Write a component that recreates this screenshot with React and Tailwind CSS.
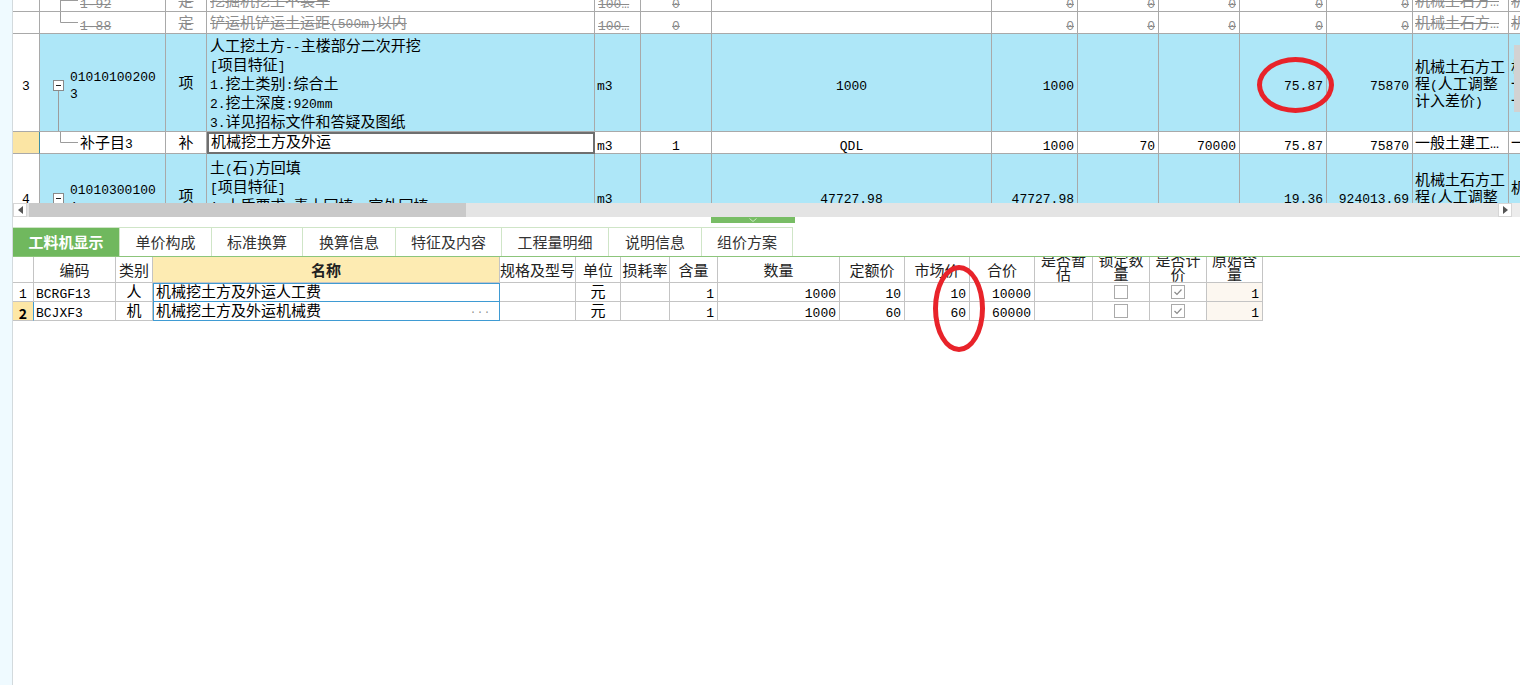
import React from "react";

const TC = ["w-[27px]","w-[126px]","w-[41px]","w-[388px]","w-[46px]","w-[71px]","w-[280px]","w-[86px]","w-[81px]","w-[81px]","w-[87px]","w-[86px]","w-[96px]","w-[40px]"];
const BC = ["w-[21px]","w-[82px]","w-[37px]","w-[347px]","w-[76px]","w-[45px]","w-[49px]","w-[48px]","w-[122px]","w-[65px]","w-[65px]","w-[65px]","w-[58px]","w-[57px]","w-[57px]","w-[56px]"];

function Cell({ w, a = "items-center", b = "border-r border-b border-[#a9a9a9]", pad = "pt-[5px]", className = "", children }) {
  return (
    <div className={`shrink-0 overflow-hidden flex ${a} ${b} ${pad} ${w} ${className}`}>{children}</div>
  );
}

const N = ({ children, className = "" }) => <span className={`text-[13px] pt-[3px] ${className}`}>{children}</span>;

function Tree({ last, h = 21 }) {
  return (
    <svg width="40" height={h} className="shrink-0">
      <line x1="20.5" y1="0" x2="20.5" y2={last ? Math.floor(h / 2) + 0.5 : h} stroke="#9c9c9c" strokeWidth="1" />
      <line x1="20.5" y1={Math.floor(h / 2) + 0.5} x2="38" y2={Math.floor(h / 2) + 0.5} stroke="#9c9c9c" strokeWidth="1" />
    </svg>
  );
}

function MinusBox() {
  return (
    <div className="w-[11px] h-[11px] shrink-0 border border-[#8a8a8a] bg-white flex items-center justify-center">
      <div className="w-[5px] h-px bg-[#222]" />
    </div>
  );
}

function StruckRow({ code, name, last, first }) {
  const s = "line-through decoration-[#8c8c8c]";
  return (
    <div className={`flex h-[22px] bg-white text-[#8c8c8c] ${first ? "-mt-[10px]" : ""}`}>
      <Cell w={TC[0]} />
      <Cell w={TC[1]} pad=""><Tree last={last} /><span className={`text-[13px] pt-[8px] ${s}`}>{code}</span></Cell>
      <Cell w={TC[2]} className="justify-center"><span className={`text-[15px] ${s}`}>定</span></Cell>
      <Cell w={TC[3]} className="pl-[3px]"><span className={`text-[15px] whitespace-nowrap ${s}`}>{name}</span></Cell>
      <Cell w={TC[4]} className="pl-[3px]"><N className={s}>100…</N></Cell>
      <Cell w={TC[5]} className="justify-center"><N className={s}>0</N></Cell>
      <Cell w={TC[6]} />
      {[7, 8, 9, 10, 11].map((i) => (
        <Cell key={i} w={TC[i]} className="justify-end pr-[3px]"><N className={s}>0</N></Cell>
      ))}
      <Cell w={TC[12]} className="pl-[2px]"><span className={`text-[15px] whitespace-nowrap ${s}`}>机械土石方…</span></Cell>
      <Cell w={TC[13]} className="pl-[2px]"><span className={`text-[15px] whitespace-nowrap ${s}`}>机械</span></Cell>
    </div>
  );
}

function TopTable() {
  const cy = "bg-[#aee7f8]";
  return (
    <div className="w-[1536px]">
      <StruckRow first code="1-92" name="挖掘机挖土不装车" />
      <StruckRow last code="1-88" name={<>铲运机铲运土运距<span className="text-[13px]">(500m)</span>以内</>} />

      {/* Row 3 */}
      <div className={`flex h-[98px] ${cy}`}>
        <Cell w={TC[0]} className="justify-center bg-white"><N>3</N></Cell>
        <Cell w={TC[1]} a="items-stretch" className="pl-[13px]">
          <div className="flex flex-col items-center w-[11px]">
            <div className="flex-1" />
            <MinusBox />
            <div className="flex-1 w-px bg-[#9c9c9c]" />
          </div>
          <div className="ml-[6px] flex flex-col justify-center text-[13px] leading-[17px] pt-[2px]">
            <span>01010100200</span>
            <span>3</span>
          </div>
        </Cell>
        <Cell w={TC[2]} className="justify-center text-[15px]">项</Cell>
        <Cell w={TC[3]} className="pl-[3px]">
          <div className="flex flex-col text-[15px] leading-[19px] whitespace-nowrap">
            <span>人工挖土方<span className="text-[13px]">--</span>主楼部分二次开挖</span>
            <span><span className="text-[13px]">[</span>项目特征<span className="text-[13px]">]</span></span>
            <span><span className="text-[13px]">1.</span>挖土类别<span className="text-[13px]">:</span>综合土</span>
            <span><span className="text-[13px]">2.</span>挖土深度<span className="text-[13px]">:920mm</span></span>
            <span><span className="text-[13px]">3.</span>详见招标文件和答疑及图纸</span>
          </div>
        </Cell>
        <Cell w={TC[4]} className="pl-[2px]"><N>m3</N></Cell>
        <Cell w={TC[5]} />
        <Cell w={TC[6]} className="justify-center"><N>1000</N></Cell>
        <Cell w={TC[7]} className="justify-end pr-[3px]"><N>1000</N></Cell>
        <Cell w={TC[8]} />
        <Cell w={TC[9]} />
        <Cell w={TC[10]} className="justify-end pr-[3px]"><N>75.87</N></Cell>
        <Cell w={TC[11]} className="justify-end pr-[3px]"><N>75870</N></Cell>
        <Cell w={TC[12]} className="pl-[2px]">
          <div className="flex flex-col text-[15px] leading-[17px] whitespace-nowrap">
            <span>机械土石方工</span>
            <span>程<span className="text-[13px]">(</span>人工调整</span>
            <span>计入差价<span className="text-[13px]">)</span></span>
          </div>
        </Cell>
        <Cell w={TC[13]} className="pl-[2px]">
          <div className="flex flex-col text-[15px] leading-[17px] whitespace-nowrap">
            <span>机械</span>
            <span>一</span>
            <span>一</span>
          </div>
        </Cell>
      </div>

      {/* 补子目 row */}
      <div className="flex h-[22px] bg-white">
        <Cell w={TC[0]} b="border-r border-b border-r-[#3b8ea6] border-b-[#a9a9a9]" className="bg-[#fbe5a4]" />
        <Cell w={TC[1]} pad=""><Tree last /><span className="text-[15px] pt-[5px]">补子目<span className="text-[13px]">3</span></span></Cell>
        <Cell w={TC[2]} className="justify-center text-[15px]">补</Cell>
        <Cell w={TC[3]} b="border-2 border-[#6f6f6f]" pad="pt-[3px]" className="pl-[2px]"><span className="text-[15px] whitespace-nowrap">机械挖土方及外运</span></Cell>
        <Cell w={TC[4]} className="pl-[2px]"><N>m3</N></Cell>
        <Cell w={TC[5]} className="justify-center"><N>1</N></Cell>
        <Cell w={TC[6]} className="justify-center"><N>QDL</N></Cell>
        <Cell w={TC[7]} className="justify-end pr-[3px]"><N>1000</N></Cell>
        <Cell w={TC[8]} className="justify-end pr-[3px]"><N>70</N></Cell>
        <Cell w={TC[9]} className="justify-end pr-[3px]"><N>70000</N></Cell>
        <Cell w={TC[10]} className="justify-end pr-[3px]"><N>75.87</N></Cell>
        <Cell w={TC[11]} className="justify-end pr-[3px]"><N>75870</N></Cell>
        <Cell w={TC[12]} className="pl-[2px]"><span className="text-[15px] whitespace-nowrap">一般土建工…</span></Cell>
        <Cell w={TC[13]} className="pl-[2px]"><span className="text-[15px] whitespace-nowrap">一般</span></Cell>
      </div>

      {/* Row 4 */}
      <div className={`flex h-[84px] ${cy}`}>
        <Cell w={TC[0]} className="justify-center bg-white"><N>4</N></Cell>
        <Cell w={TC[1]} a="items-stretch" className="pl-[13px]">
          <div className="flex flex-col items-center w-[11px]">
            <div className="flex-1" />
            <MinusBox />
            <div className="flex-1 w-px bg-[#9c9c9c]" />
          </div>
          <div className="ml-[6px] flex flex-col justify-center text-[13px] leading-[17px] pt-[2px]">
            <span>01010300100</span>
            <span>1</span>
          </div>
        </Cell>
        <Cell w={TC[2]} className="justify-center text-[15px]">项</Cell>
        <Cell w={TC[3]} className="pl-[3px]">
          <div className="flex flex-col text-[15px] leading-[19px] whitespace-nowrap">
            <span>土<span className="text-[13px]">(</span>石<span className="text-[13px]">)</span>方回填</span>
            <span><span className="text-[13px]">[</span>项目特征<span className="text-[13px]">]</span></span>
            <span><span className="text-[13px]">1.</span>土质要求<span className="text-[13px]">:</span>素土回填，室外回填</span>
            <span><span className="text-[13px]">2.</span>填方来源、运距<span className="text-[13px]">:</span>综合考虑</span>
          </div>
        </Cell>
        <Cell w={TC[4]} className="pl-[2px]"><N>m3</N></Cell>
        <Cell w={TC[5]} />
        <Cell w={TC[6]} className="justify-center"><N>47727.98</N></Cell>
        <Cell w={TC[7]} className="justify-end pr-[3px]"><N>47727.98</N></Cell>
        <Cell w={TC[8]} />
        <Cell w={TC[9]} />
        <Cell w={TC[10]} className="justify-end pr-[3px]"><N>19.36</N></Cell>
        <Cell w={TC[11]} className="justify-end pr-[3px]"><N>924013.69</N></Cell>
        <Cell w={TC[12]} className="pl-[2px]">
          <div className="flex flex-col text-[15px] leading-[17px] whitespace-nowrap">
            <span>机械土石方工</span>
            <span>程<span className="text-[13px]">(</span>人工调整</span>
            <span>计入差价<span className="text-[13px]">)</span></span>
          </div>
        </Cell>
        <Cell w={TC[13]} className="pl-[2px]">
          <div className="flex flex-col text-[15px] leading-[17px] whitespace-nowrap">
            <span>机械</span>
            <span>一</span>
          </div>
        </Cell>
      </div>
    </div>
  );
}

function HScroll() {
  return (
    <div className="h-[14px] flex bg-[#e4e4e4]">
      <div className="w-[14px] h-full bg-white border border-[#d6d6d6] flex items-center justify-center">
        <svg width="5" height="8"><polygon points="5,0 5,8 0,4" fill="#555" /></svg>
      </div>
      <div className="w-[2px]" />
      <div className="w-[437px] h-full bg-[#c9c9c9]" />
      <div className="flex-1" />
      <div className="w-[14px] h-full bg-white border border-[#d6d6d6] flex items-center justify-center">
        <svg width="5" height="8"><polygon points="0,0 0,8 5,4" fill="#555" /></svg>
      </div>
      <div className="w-[8px] bg-[#ececec]" />
    </div>
  );
}

const TABS = [
  ["工料机显示", "w-[107px]"],
  ["单价构成", "w-[92px]"],
  ["标准换算", "w-[91px]"],
  ["换算信息", "w-[93px]"],
  ["特征及内容", "w-[106px]"],
  ["工程量明细", "w-[107px]"],
  ["说明信息", "w-[93px]"],
  ["组价方案", "w-[91px]"],
];

function Tabs() {
  return (
    <div className="h-[30px] flex border-b border-[#8cc57b] font-[family-name:'Noto_Sans_CJK_SC',sans-serif]">
      {TABS.map(([t, w], i) => (
        <div
          key={t}
          className={`${w} h-full flex items-center justify-center text-[15px] border-r border-t border-[#cfe5c7] ${
            i === 0 ? "bg-[#70b85e] text-white font-bold border-[#70b85e]" : "bg-white text-[#333]"
          }`}
        >
          {t}
        </div>
      ))}
    </div>
  );
}

function Check({ checked }) {
  return (
    <div className="w-[14px] h-[14px] border border-[#aaaaaa] bg-white flex items-center justify-center">
      {checked && (
        <svg width="10" height="8">
          <polyline points="1.5,4 4,6.5 8.5,1.5" fill="none" stroke="#8a8a8a" strokeWidth="1.2" />
        </svg>
      )}
    </div>
  );
}

const bb = "border-r border-b border-[#c4c4c4]";

function HeadCell({ i, children, className = "" }) {
  return (
    <div className={`shrink-0 overflow-hidden flex items-center justify-center ${bb} ${BC[i]} ${className}`}>{children}</div>
  );
}

function TwoLine({ a, b }) {
  return (
    <div className="h-full flex flex-col justify-end items-center leading-[14px] pb-[1px] whitespace-nowrap">
      <span>{a}</span>
      <span>{b}</span>
    </div>
  );
}

function BottomRow({ n, code, type, name, dq, mp, total, sel }) {
  const p = "pt-[3px]";
  return (
    <div className="flex h-[19px] text-[15px] leading-[18px]">
      <Cell w={BC[0]} pad={p} b={sel ? "border-r border-b border-r-[#3f9bd3] border-b-[#c4c4c4]" : bb} className={`justify-center ${sel ? "bg-[#fde7a6] font-bold" : ""}`}>
        {sel ? (
          <span className="text-[14px] font-bold font-[family-name:'Noto_Sans_CJK_SC',sans-serif]">{n}</span>
        ) : (
          <N>{n}</N>
        )}
      </Cell>
      <Cell w={BC[1]} pad={p} b={bb} className="pl-[2px]"><N>{code}</N></Cell>
      <Cell w={BC[2]} pad={p} b={bb} className="justify-center">{type}</Cell>
      <Cell
        w={BC[3]}
        pad={sel ? p : "pt-[2px]"}
        b={sel ? "border-l border-r border-b border-[#3f9bd3]" : "border border-[#3f9bd3]"}
        className="pl-[2px]"
      >
        <span className="whitespace-nowrap">{name}</span>
        {sel && <span className="ml-auto mr-[8px] text-[10px] leading-[10px] text-[#8a8a8a] tracking-[1px]">···</span>}
      </Cell>
      <Cell w={BC[4]} pad={p} b={bb} />
      <Cell w={BC[5]} pad={p} b={bb} className="justify-center">元</Cell>
      <Cell w={BC[6]} pad={p} b={bb} />
      <Cell w={BC[7]} pad={p} b={bb} className="justify-end pr-[3px]"><N>1</N></Cell>
      <Cell w={BC[8]} pad={p} b={bb} className="justify-end pr-[3px]"><N>1000</N></Cell>
      <Cell w={BC[9]} pad={p} b={bb} className="justify-end pr-[3px]"><N>{dq}</N></Cell>
      <Cell w={BC[10]} pad={p} b={bb} className="justify-end pr-[3px]"><N>{mp}</N></Cell>
      <Cell w={BC[11]} pad={p} b={bb} className="justify-end pr-[3px]"><N>{total}</N></Cell>
      <Cell w={BC[12]} pad="" b={bb} />
      <Cell w={BC[13]} pad="" b={bb} className="justify-center"><Check /></Cell>
      <Cell w={BC[14]} pad="" b={bb} className="justify-center"><Check checked /></Cell>
      <Cell w={BC[15]} pad={p} b={bb} className="justify-end pr-[3px] bg-[#fcf7f0]"><N>1</N></Cell>
    </div>
  );
}

function BottomTable() {
  return (
    <div className="flex flex-col">
      <div className="flex h-[26px] text-[15px] text-[#222] font-[family-name:'Noto_Sans_CJK_SC',sans-serif] leading-[24px]">
        <HeadCell i={0} />
        <HeadCell i={1}>编码</HeadCell>
        <HeadCell i={2}>类别</HeadCell>
        <HeadCell i={3} className="bg-[#fdebb2] font-bold">名称</HeadCell>
        <HeadCell i={4} className="whitespace-nowrap">规格及型号</HeadCell>
        <HeadCell i={5}>单位</HeadCell>
        <HeadCell i={6}>损耗率</HeadCell>
        <HeadCell i={7}>含量</HeadCell>
        <HeadCell i={8}>数量</HeadCell>
        <HeadCell i={9}>定额价</HeadCell>
        <HeadCell i={10}>市场价</HeadCell>
        <HeadCell i={11}>合价</HeadCell>
        <HeadCell i={12}><TwoLine a="是否暂" b="估" /></HeadCell>
        <HeadCell i={13}><TwoLine a="锁定数" b="量" /></HeadCell>
        <HeadCell i={14}><TwoLine a="是否计" b="价" /></HeadCell>
        <HeadCell i={15}><TwoLine a="原始含" b="量" /></HeadCell>
      </div>
      <BottomRow n="1" code="BCRGF13" type="人" name="机械挖土方及外运人工费" dq="10" mp="10" total="10000" />
      <BottomRow sel n="2" code="BCJXF3" type="机" name="机械挖土方及外运机械费" dq="60" mp="60" total="60000" />
    </div>
  );
}

export default function App() {
  return (
    <div className="relative w-[1520px] h-[685px] overflow-hidden bg-white flex text-black font-[family-name:'Liberation_Mono','Noto_Sans_CJK_SC',monospace]">
      <div className="w-[13px] shrink-0 bg-[#effaff] border-r border-[#d3dadd]" />
      <div className="flex-1 min-w-0 flex flex-col">
        <div className="relative h-[203px] overflow-hidden">
          <TopTable />
          <div className="absolute right-0 top-[45px] w-[6px] h-[67px] bg-[#d2d2d2]" />
        </div>
        <HScroll />
        <div className="h-[10px]">
          <div className="ml-[698px] w-[84px] h-[6px] bg-[#78bd65] flex justify-center items-center">
            <svg width="8" height="4"><polyline points="0.5,0.5 4,3.5 7.5,0.5" fill="none" stroke="#c9e8bf" strokeWidth="1" /></svg>
          </div>
        </div>
        <Tabs />
        <BottomTable />
      </div>
      <div className="absolute left-[1257px] top-[57px] w-[77px] h-[56px] rounded-[50%] border-[5px] border-[#e8232a]" />
      <div className="absolute left-[933px] top-[265px] w-[52px] h-[87px] rounded-[50%] border-[5px] border-[#e8232a]" />
    </div>
  );
}
